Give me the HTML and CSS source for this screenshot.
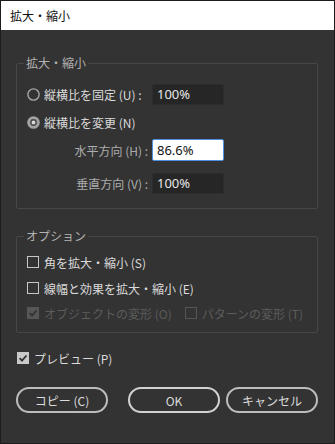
FILE: index.html
```html
<!DOCTYPE html>
<html lang="ja">

<head>
    <meta charset="UTF-8">
    <meta name="viewport" content="width=device-width, initial-scale=1.0">
    <title>拡大・縮小</title>
    <link rel="stylesheet" href="styles.css">
</head>

<body>
    <div class="dialog">
        <div class="titlebar">拡大・縮小</div>

        <div class="content">
            <fieldset class="group scale">
                <legend>拡大・縮小</legend>

                <div class="row">
                    <label class="field-label">
                        <svg class="radio" width="13" height="13" viewBox="0 0 13 13">
                            <circle cx="6.5" cy="6.5" r="5.6" fill="none" stroke="#a8a8a8" stroke-width="1.4" />
                        </svg>
                        <span>縦横比を固定 (U) :</span>
                    </label>
                    <input class="num" type="text" value="100%">
                </div>

                <div class="row">
                    <label class="field-label">
                        <svg class="radio" width="13" height="13" viewBox="0 0 13 13">
                            <circle cx="6.5" cy="6.5" r="6.3" fill="#a3a3a3" />
                            <circle cx="6.5" cy="6.5" r="3.4" fill="#4a4a4a" />
                            <circle cx="6.5" cy="6.5" r="1.9" fill="#d8d8d8" />
                        </svg>
                        <span>縦横比を変更 (N)</span>
                    </label>
                </div>

                <div class="row">
                    <label class="field-label sub">水平方向 (H) :</label>
                    <input class="num focus" type="text" value="86.6%">
                </div>

                <div class="row last">
                    <label class="field-label sub">垂直方向 (V) :</label>
                    <input class="num" type="text" value="100%">
                </div>
            </fieldset>

            <fieldset class="group options">
                <legend>オプション</legend>

                <label class="check">
                    <svg width="12" height="12" viewBox="0 0 12 12">
                        <rect x="0.5" y="0.5" width="11" height="11" fill="none" stroke="#c6c6c6" />
                    </svg>
                    <span>角を拡大・縮小 (S)</span>
                </label>

                <label class="check">
                    <svg width="12" height="12" viewBox="0 0 12 12">
                        <rect x="0.5" y="0.5" width="11" height="11" fill="none" stroke="#c6c6c6" />
                    </svg>
                    <span>線幅と効果を拡大・縮小 (E)</span>
                </label>

                <div class="check-pair">
                    <label class="check disabled">
                        <svg width="12" height="12" viewBox="0 0 12 12">
                            <rect x="0" y="0" width="12" height="12" fill="#565656" />
                            <path d="M2.6 6.2 L5 8.6 L9.5 3.5" fill="none" stroke="#333" stroke-width="1.8" />
                        </svg>
                        <span>オブジェクトの変形 (O)</span>
                    </label>
                    <label class="check disabled">
                        <svg width="12" height="12" viewBox="0 0 12 12">
                            <rect x="0.5" y="0.5" width="11" height="11" fill="none" stroke="#565656" />
                        </svg>
                        <span>パターンの変形 (T)</span>
                    </label>
                </div>
            </fieldset>

            <label class="check preview">
                <svg width="12" height="12" viewBox="0 0 12 12">
                    <rect x="0" y="0" width="12" height="12" fill="#c9c9c9" />
                    <path d="M2.6 6.2 L5 8.6 L9.5 3.5" fill="none" stroke="#333" stroke-width="1.8" />
                </svg>
                <span>プレビュー (P)</span>
            </label>

            <div class="buttons">
                <button class="btn">コピー (C)</button>
                <button class="btn primary">OK</button>
                <button class="btn">キャンセル</button>
            </div>
        </div>
    </div>
</body>

</html>
```

FILE: styles.css
```css
* {
    box-sizing: border-box;
}

body {
    margin: 0;
    font-family: "Noto Sans CJK JP", "Noto Sans", sans-serif;
    font-size: 12px;
    color: #dadada;
    background: #333;
}

.dialog {
    width: 335px;
    height: 444px;
    border: 1px solid #1c1c1c;
    background: #333;
}

.titlebar {
    height: 29px;
    padding-left: 9px;
    line-height: 29px;
    background: #fff;
    color: #111;
    font-size: 12px;
}

.content {
    padding: 25px 16px 0 15px;
}

/* group boxes */
.group {
    margin: 0;
    padding: 0 10px;
    border: 1px solid #474747;
    border-radius: 2px;
}

.group legend {
    margin-left: -3px;
    padding: 0 2px;
    line-height: 16px;
    color: #b2b2b2;
}

.scale {
    padding-top: 12px;
    padding-bottom: 14px;
}

.options {
    margin-top: 19px;
    padding-top: 8px;
    padding-bottom: 9px;
}

.row {
    display: flex;
    align-items: center;
    height: 22px;
    margin-bottom: 6px;
}

.row:nth-child(4) {
    margin-bottom: 11px;
}

.row.last {
    margin-bottom: 0;
}

.field-label {
    display: flex;
    align-items: center;
    gap: 4px;
    width: 121px;
    white-space: nowrap;
}

.field-label.sub {
    justify-content: flex-end;
    color: #adadad;
}

.num {
    width: 72px;
    height: 21px;
    margin-left: 4px;
    padding: 0 4px;
    border: 1px solid #2c2c2c;
    border-radius: 2px;
    background: #262626;
    color: #e6e6e6;
    font-family: "Noto Sans", sans-serif;
    font-size: 13px;
    outline: none;
}

.num.focus {
    height: 22px;
    border-color: #4d8fe0;
    background: #fff;
    color: #111;
}

/* checkboxes */
.check {
    display: flex;
    align-items: center;
    gap: 5px;
    height: 20px;
    white-space: nowrap;
}

.options > .check + .check {
    margin-top: 6px;
}

.check-pair {
    display: flex;
    gap: 13px;
    margin-top: 5px;
}

.check.disabled {
    color: #5c5c5c;
}

.preview {
    margin: 15px 0 0 1px;
}

/* buttons */
.buttons {
    display: flex;
    gap: 6px;
    margin-top: 19px;
}

.btn {
    width: 92px;
    height: 26px;
    padding: 0;
    border: 2px solid #bdbdbd;
    border-radius: 13px;
    background: #333;
    color: #dcdcdc;
    font-family: "Noto Sans CJK JP", "Noto Sans", sans-serif;
    font-size: 12px;
}

.btn.primary {
    margin-left: auto;
    border-color: #d2d2d2;
}
```
